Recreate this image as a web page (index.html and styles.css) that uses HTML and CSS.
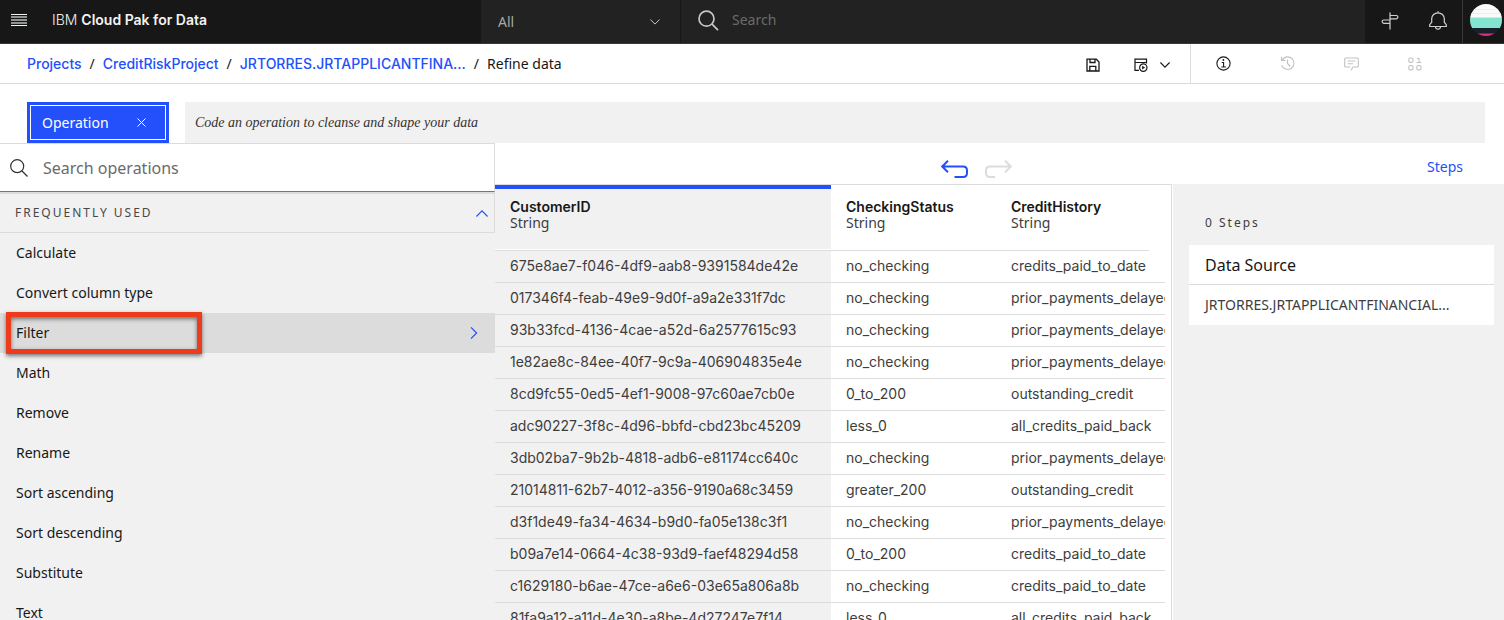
FILE: index.html
```html
<!DOCTYPE html>
<html lang="en">
<head>
<meta charset="utf-8">
<title>Refine data</title>
<link rel="stylesheet" href="styles.css">
</head>
<body>
<header class="topbar">
  <div class="brand">
    <button class="icon-btn" aria-label="Menu"><svg width="16" height="12" viewBox="0 0 16 12"><path d="M0 .5h16M0 11.5h16" stroke="#f3f3f3"/><path d="M0 3h16M0 6h16M0 9h16" stroke="#b8bdbd" stroke-width="1.3"/></svg></button>
    <span class="brand-name">IBM <strong>Cloud Pak for Data</strong></span>
  </div>
  <div class="scope">
    <select class="scope-select" aria-label="Scope"><option>All</option></select>
    <svg width="10" height="6" viewBox="0 0 10 6" fill="none" stroke="#c8c8c8"><path d="M.4.5 5 5.1 9.6.5"/></svg>
  </div>
  <label class="global-search">
    <svg width="21" height="21" viewBox="0 0 21 21" fill="none" stroke="#c6c6c6" stroke-width="1.7"><circle cx="8.5" cy="8.7" r="7.5"/><path d="m14 14.2 6 6"/></svg>
    <input type="search" placeholder="Search" aria-label="Search">
  </label>
  <div class="top-actions">
    <button class="icon-btn" aria-label="Guide"><svg width="18" height="18" viewBox="0 0 18 18" fill="none" stroke="#d0d0d0" stroke-width="1.2"><path d="M9 .5v17M9 3.500h6.300q1.600 0 1.600 1.500t-1.600 1.800H9zM9 8H2.700Q1.100 8 1.100 9.500t1.600 1.800H9z"/></svg></button>
    <button class="icon-btn" aria-label="Notifications"><svg width="18" height="19" viewBox="0 0 18 19" fill="none" stroke="#d0d0d0" stroke-width="1.2"><path d="M9 .3v1.500M.7 15.500h16.600v-1.800l-2-2.500V7.800C15.300 4.400 12.500 1.800 9 1.800S2.700 4.400 2.700 7.800v3.400l-2 2.500zM6.500 15.800c.2 3.200 4.800 3.200 5 0"/></svg></button>
  </div>
  <button class="profile icon-btn" aria-label="Profile"><svg width="32" height="32" viewBox="0 0 32 32"><clipPath id="disc"><circle cx="16" cy="16" r="16"/></clipPath><g clip-path="url(#disc)"><path fill="#fafafa" d="M0 0h32v14H0z"/><path fill="#84e6d0" d="M0 13.500h32v11H0z"/><path fill="#17212c" d="M0 24h32v6H0z"/><path fill="#cf3279" d="M0 29.500h32V32H0z"/><path d="M0 5.500h32M0 9.500h32" stroke="#eee"/></g></svg></button>
</header>

<div class="crumbbar">
  <nav class="crumbs" aria-label="Breadcrumb">
    <a href="#">Projects</a><span>/</span><a href="#">CreditRiskProject</a><span>/</span><a href="#">JRTORRES.JRTAPPLICANTFINA...</a><span>/</span><span>Refine data</span>
  </nav>
  <div class="save-actions">
    <button class="icon-btn" aria-label="Save"><svg width="14" height="14" viewBox="0 0 14 14" fill="none" stroke="#161616" stroke-width="1.300"><path d="M1 1.200h9.300L13 4v9H1zM4 1v3.500h5V1M3.800 13V8.300h6V13"/></svg></button>
    <button class="icon-btn" aria-label="Save and create a job"><svg width="14" height="14" viewBox="0 0 14 14" fill="none" stroke="#161616" stroke-width="1.200"><path d="M5 12.400H1V1.200h11.500v3.300H1M12.500 4.500v1"/><circle cx="9.300" cy="9.600" r="3.700"/><path fill="#161616" stroke="none" d="M8.100 7.700v3.800l3-1.900z"/></svg></button>
    <button class="icon-btn" aria-label="More save options"><svg width="10" height="6" viewBox="0 0 10 6" fill="none" stroke="#161616" stroke-width="1.100"><path d="M.4.5 5 5.100 9.600.5"/></svg></button>
  </div>
  <div class="panel-actions">
    <button class="icon-btn" aria-label="Information"><svg width="15" height="15" viewBox="0 0 15 15" fill="none" stroke="#161616" stroke-width="1.100"><circle cx="7.500" cy="7.500" r="6.600"/><path d="M5.700 6.500h1.900v4.300M5.300 11h4.600"/><circle cx="7.400" cy="4" r=".9" fill="#161616" stroke="none"/></svg></button>
    <button class="icon-btn" aria-label="History" disabled><svg width="15" height="15" viewBox="0 0 15 15" fill="none" stroke="#c1c1c1" stroke-width="1.100"><path d="M2.200 4A6.300 6.300 0 1 1 1.700 9.200M1.500.8v3.600h3.700M7.500 3.500v4l2.800 3"/></svg></button>
    <button class="icon-btn" aria-label="Comments" disabled><svg width="15" height="14" viewBox="0 0 15 14" fill="none" stroke="#c1c1c1" stroke-width="1.100"><path d="m7 13.200 2-3.200h4.300q1 0 1-1V2q0-1-1-1H1.700q-1 0-1 1v7q0 1 1 1H6.500M3.500 4h8M3.500 6.700h5.500"/></svg></button>
    <button class="icon-btn" aria-label="Data" disabled><svg width="14" height="14" viewBox="0 0 14 14" fill="none" stroke="#c1c1c1" stroke-width="1.100"><rect x=".8" y="1" width="4.200" height="4.400" rx="1.500"/><path d="M9 1.500h2v4M8.700 5.500h4.600"/><rect x=".8" y="8.500" width="4.200" height="4.400" rx="1.500"/><rect x="8.800" y="8.500" width="4.200" height="4.400" rx="1.500"/></svg></button>
  </div>
</div>

<div class="command">
  <button class="operation">Operation<svg width="9" height="9" viewBox="0 0 9 9" fill="none" stroke="#fff"><path d="m.5.5 8 8m0-8-8 8"/></svg></button>
  <input class="code" placeholder="Code an operation to cleanse and shape your data" aria-label="Code an operation">
</div>

<main class="workspace">
  <aside class="operations">
    <label class="op-search">
      <svg width="18" height="18" viewBox="0 0 18 18" fill="none" stroke="#333" stroke-width="1.200"><circle cx="7.200" cy="7.200" r="6.500"/><path d="m12 12 5.500 5.500"/></svg>
      <input type="search" placeholder="Search operations" aria-label="Search operations">
    </label>
    <button class="group">FREQUENTLY USED<svg width="12" height="7" viewBox="0 0 12 7" fill="none" stroke="#2450fc" stroke-width="1.200"><path d="M.4 6.500 6 .9l5.600 5.600"/></svg></button>
    <ul class="op-list">
      <li><button class="op">Calculate</button></li>
      <li><button class="op">Convert column type</button></li>
      <li class="current"><button class="op">Filter<svg width="8" height="12" viewBox="0 0 8 12" fill="none" stroke="#2450fc" stroke-width="1.200"><path d="m1 .4 5.600 5.600L1 11.600"/></svg></button></li>
      <li><button class="op">Math</button></li>
      <li><button class="op">Remove</button></li>
      <li><button class="op">Rename</button></li>
      <li><button class="op">Sort ascending</button></li>
      <li><button class="op">Sort descending</button></li>
      <li><button class="op">Substitute</button></li>
      <li><button class="op">Text</button></li>
    </ul>
  </aside>

  <section class="content">
    <div class="toolbar">
      <div class="undo-redo">
        <button class="icon-btn" aria-label="Undo"><svg width="28" height="18" viewBox="0 0 28 18" fill="none" stroke="#2450fc" stroke-width="2"><path d="M7 .8 1.200 6.500 7 12.200M1.500 6.500H22q4 0 4 4v2.500q0 4-4 4h-8.500"/></svg></button>
        <button class="icon-btn" aria-label="Redo" disabled><svg width="28" height="18" viewBox="0 0 28 18" fill="none" stroke="#dcdcdc" stroke-width="2"><path d="m20 .8 5.800 5.700-5.800 5.700M25.500 6.500H5q-4 0-4 4v2.500q0 4 4 4h5"/></svg></button>
      </div>
      <button class="steps-toggle">Steps</button>
    </div>
    <div class="split">
      <div class="grid">
        <table>
          <colgroup><col class="col-id"><col class="col-status"><col></colgroup>
          <thead><tr>
            <th class="selected"><div><b>CustomerID</b><span>String</span></div></th>
            <th><div><b>CheckingStatus</b><span>String</span></div></th>
            <th class="last"><div><b>CreditHistory</b><span>String</span></div></th>
          </tr></thead>
          <tbody>
            <tr><td>675e8ae7-f046-4df9-aab8-9391584de42e</td><td>no_checking</td><td>credits_paid_to_date</td></tr>
            <tr><td>017346f4-feab-49e9-9d0f-a9a2e331f7dc</td><td>no_checking</td><td>prior_payments_delayed</td></tr>
            <tr><td>93b33fcd-4136-4cae-a52d-6a2577615c93</td><td>no_checking</td><td>prior_payments_delayed</td></tr>
            <tr><td>1e82ae8c-84ee-40f7-9c9a-406904835e4e</td><td>no_checking</td><td>prior_payments_delayed</td></tr>
            <tr><td>8cd9fc55-0ed5-4ef1-9008-97c60ae7cb0e</td><td>0_to_200</td><td>outstanding_credit</td></tr>
            <tr><td>adc90227-3f8c-4d96-bbfd-cbd23bc45209</td><td>less_0</td><td>all_credits_paid_back</td></tr>
            <tr><td>3db02ba7-9b2b-4818-adb6-e81174cc640c</td><td>no_checking</td><td>prior_payments_delayed</td></tr>
            <tr><td>21014811-62b7-4012-a356-9190a68c3459</td><td>greater_200</td><td>outstanding_credit</td></tr>
            <tr><td>d3f1de49-fa34-4634-b9d0-fa05e138c3f1</td><td>no_checking</td><td>prior_payments_delayed</td></tr>
            <tr><td>b09a7e14-0664-4c38-93d9-faef48294d58</td><td>0_to_200</td><td>credits_paid_to_date</td></tr>
            <tr><td>c1629180-b6ae-47ce-a6e6-03e65a806a8b</td><td>no_checking</td><td>credits_paid_to_date</td></tr>
            <tr><td>81fa9a12-a11d-4e30-a8be-4d27247e7f14</td><td>less_0</td><td>all_credits_paid_back</td></tr>
          </tbody>
        </table>
      </div>
      <aside class="steps">
        <p class="step-count">0 Steps</p>
        <div class="card">
          <h2>Data Source</h2>
          <p>JRTORRES.JRTAPPLICANTFINANCIAL...</p>
        </div>
      </aside>
    </div>
  </section>
</main>
</body>
</html>
```
FILE: styles.css
```css
* { box-sizing: border-box; }
body {
  margin: 0;
  height: 100vh;
  overflow: hidden;
  display: flex;
  flex-direction: column;
  background: #fff;
  color: #171717;
  font: 14px/20px "Noto Sans", "Open Sans", sans-serif;
}
button, input, select {
  font: inherit;
  color: inherit;
  background: none;
  border: 0;
  border-radius: 0;
  padding: 0;
  margin: 0;
  outline: 0;
}
svg { display: block; flex: none; }
.icon-btn { display: flex; align-items: center; justify-content: center; }

.topbar {
  flex: none;
  display: flex;
  height: 44px;
  border-bottom: 1px solid #393636;
  background: #171717;
  color: #f3f3f3;
}
.brand {
  width: 481px;
  display: flex;
  align-items: center;
  gap: 25px;
  padding: 0 0 3px 11px;
}
.brand-name { font-family: Inter, sans-serif; font-weight: 300; }
.brand-name strong { font-weight: 600; }
.scope {
  width: 199px;
  display: flex;
  align-items: center;
  padding-right: 20px;
  background: #222;
}
.scope-select {
  flex: 1;
  height: 42px;
  padding-left: 17px;
  appearance: none;
  color: #a8a8a8;
}
.global-search {
  flex: 1;
  display: flex;
  align-items: center;
  gap: 13px;
  margin-left: 1px;
  padding: 0 16px 3px 17px;
  background: #222;
}
.global-search input { flex: 1; }
.global-search input::placeholder { color: #6b6b6b; }
.top-actions {
  display: flex;
  align-items: center;
  width: 97px;
  padding: 0 0 2px 1px;
}
.top-actions .icon-btn { width: 48px; }
.profile { border-left: 1px solid #393939; padding: 0 2px 3px 7px; }

.crumbbar {
  flex: none;
  display: flex;
  height: 40px;
  border-bottom: 1px solid #dcdcdc;
}
.crumbs {
  flex: 1;
  display: flex;
  align-items: center;
  gap: 8px;
  padding-left: 27px;
}
.crumbs a { color: #2450fc; text-decoration: none; font-family: Inter, sans-serif; font-weight: 500; }
.save-actions {
  display: flex;
  align-items: center;
  gap: 17px;
  padding: 3px 20px 0 0;
}
.save-actions .icon-btn:first-child { margin-right: 17px; }
.save-actions .icon-btn:nth-child(2) { margin-right: -5px; }
.panel-actions {
  display: flex;
  border-left: 1px solid #dcdcdc;
  padding-right: 57px;
}
.panel-actions .icon-btn { width: 64px; }

.command { flex: none; display: flex; gap: 16px; padding: 18px 19px 0 27px; }
.operation {
  width: 142px;
  height: 41px;
  display: flex;
  align-items: center;
  justify-content: space-between;
  padding: 0 23px 0 15px;
  background: #2450fc;
  color: #fff;
  box-shadow: inset 0 0 0 3px #2450fc, inset 0 0 0 4px #fff;
}
.code {
  flex: 1;
  height: 41px;
  padding: 0 10px;
  background: #f1f1f1;
  font: italic 14px/20px "Liberation Serif", serif;
}
.code::placeholder { color: #333; }

.workspace { flex: 1; min-height: 0; display: flex; }
.operations {
  flex: none;
  width: 495px;
  overflow: hidden;
  background: #f1f1f1;
  border-top: 1px solid #dcdcdc;
}
.op-search {
  display: flex;
  align-items: center;
  gap: 15px;
  height: 48px;
  padding-left: 10px;
  background: #fff;
  border-right: 1px solid #dcdcdc;
  border-bottom: 1px solid #777;
}
.op-search input { flex: 1; font-size: 16px; height: 32px; }
.op-search input::placeholder { color: #6b6b6b; }
.group {
  width: 100%;
  height: 41px;
  display: flex;
  align-items: center;
  justify-content: space-between;
  padding: 0 6px 0 15px;
  border: solid #dcdcdc;
  border-width: 2px 1px 1px 0;
  font-size: 12px;
  letter-spacing: 2px;
  color: #474747;
}
.op-list { list-style: none; margin: 0; padding: 0; }
.op {
  width: 100%;
  height: 40px;
  display: flex;
  align-items: center;
  justify-content: space-between;
  padding: 0 17px 0 16px;
}
.current { position: relative; background: #dcdcdc; }
.current::after {
  content: "";
  position: absolute;
  box-sizing: border-box;
  top: -1px;
  left: 6px;
  width: 196px;
  height: 42px;
  border: 5px solid #ed3b1c;
  box-shadow: 0 2px 4px rgba(0, 0, 0, .5), inset 0 2px 4px rgba(0, 0, 0, .5);
}

.content { flex: 1; min-width: 0; display: flex; flex-direction: column; }
.toolbar {
  flex: none;
  height: 41px;
  display: grid;
  grid-template-columns: 1fr auto 1fr;
  align-items: center;
  padding-right: 41px;
}
.undo-redo { grid-column: 2; display: flex; gap: 16px; padding: 11px 5px 0 0; height: 41px; align-items: center; }
.steps-toggle { justify-self: end; color: #2450fc; padding-top: 6px; }
.split { flex: 1; min-height: 0; display: flex; gap: 1px; }
.grid {
  flex: 1;
  min-width: 0;
  overflow: hidden;
  padding-right: 6px;
  border-top: 1px solid #dcdcdc;
  border-right: 1px solid #dcdcdc;
}
table { width: 100%; table-layout: fixed; border-collapse: separate; border-spacing: 0; }
.col-id { width: 336px; }
.col-status { width: 165px; }
th { padding: 0; text-align: left; font-weight: 400; }
th div {
  height: 66px;
  padding: 14px 0 0 15px;
  border-bottom: 1px solid #dcdcdc;
  line-height: 16px;
}
th b, th span { display: block; }
th b { font-family: Inter, sans-serif; font-weight: 600; }
th span { color: #3d3d3d; }
.selected div { padding-top: 10px; border-top: 4px solid #2450fc; background: #f1f1f1; box-shadow: inset 0 -1px #fff; }
.last div { margin-right: 16px; }
td {
  height: 32px;
  padding: 0 0 1px 15px;
  border-bottom: 1px solid #dcdcdc;
  color: #3d3d3d;
  font-family: Inter, sans-serif;
  overflow: hidden;
  white-space: nowrap;
}
td:first-child { background: #f1f1f1; }
.steps { flex: none; width: 331px; padding: 29px 10px 0 16px; background: #f1f1f1; }
.step-count { margin: 0 0 12px 16px; font-size: 12px; letter-spacing: 2px; color: #3d3d3d; }
.card { background: #fff; }
.card h2 { margin: 0; padding: 10px 16px 9px; font-size: 16px; font-weight: 400; border-bottom: 1px solid #dcdcdc; }
.card p { margin: 0; padding: 10px 16px; color: #3d3d3d; white-space: nowrap; overflow: hidden; }
```
